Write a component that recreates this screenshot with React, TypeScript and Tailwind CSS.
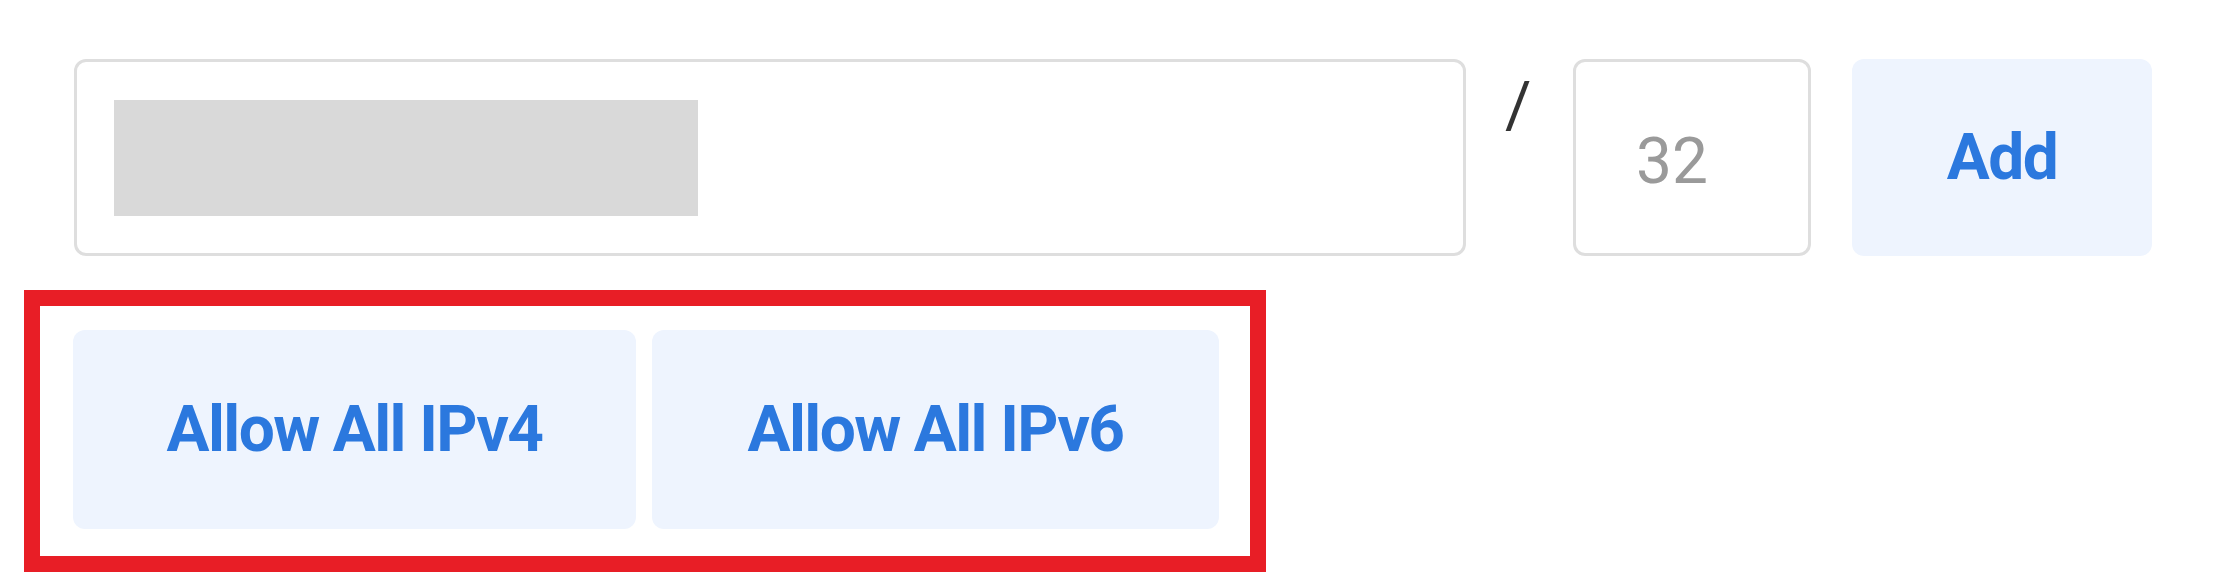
import React from "react";

export default function App() {
  return (
    <div
      className="w-[2218px] h-[586px] bg-white pt-[59px]"
      style={{ fontFamily: "Roboto, 'Noto Sans', 'Liberation Sans', sans-serif" }}
    >
      <div className="flex items-start pl-[74px]">
        <div className="w-[1392px] h-[197px] border-[3px] border-[#dedede] rounded-[12px] bg-white flex items-start pl-[37px] pt-[38px]">
          <div className="w-[584px] h-[116px] bg-[#d9d9d9]" />
        </div>
        <span className="ml-[39px] mt-[15px] w-[26px] text-[64px] leading-none text-[#333333]">/</span>
        <div className="ml-[42px] w-[238px] h-[197px] border-[3px] border-[#dedede] rounded-[12px] bg-white flex items-center pl-[60px]">
          <span className="mt-[9px] text-[64px] leading-none text-[#9a9a9a]">32</span>
        </div>
        <button className="ml-[41px] w-[300px] h-[197px] rounded-[12px] bg-[#eef4fe] flex items-center justify-center text-[64px] font-bold leading-none tracking-[-1.5px] text-[#2b78de]">
          Add
        </button>
      </div>
      <div className="mt-[34px] ml-[24px] w-[1242px] h-[282px] border-[16px] border-[#e81e26] flex items-start pl-[33px] pt-[24px] gap-[16px]">
        <button className="w-[563px] h-[199px] rounded-[12px] bg-[#eef4fe] flex items-center justify-center text-[64px] font-bold leading-none tracking-[-1.6px] text-[#2b78de]">
          Allow All IPv4
        </button>
        <button className="w-[567px] h-[199px] rounded-[12px] bg-[#eef4fe] flex items-center justify-center text-[64px] font-bold leading-none tracking-[-1.6px] text-[#2b78de]">
          Allow All IPv6
        </button>
      </div>
    </div>
  );
}
